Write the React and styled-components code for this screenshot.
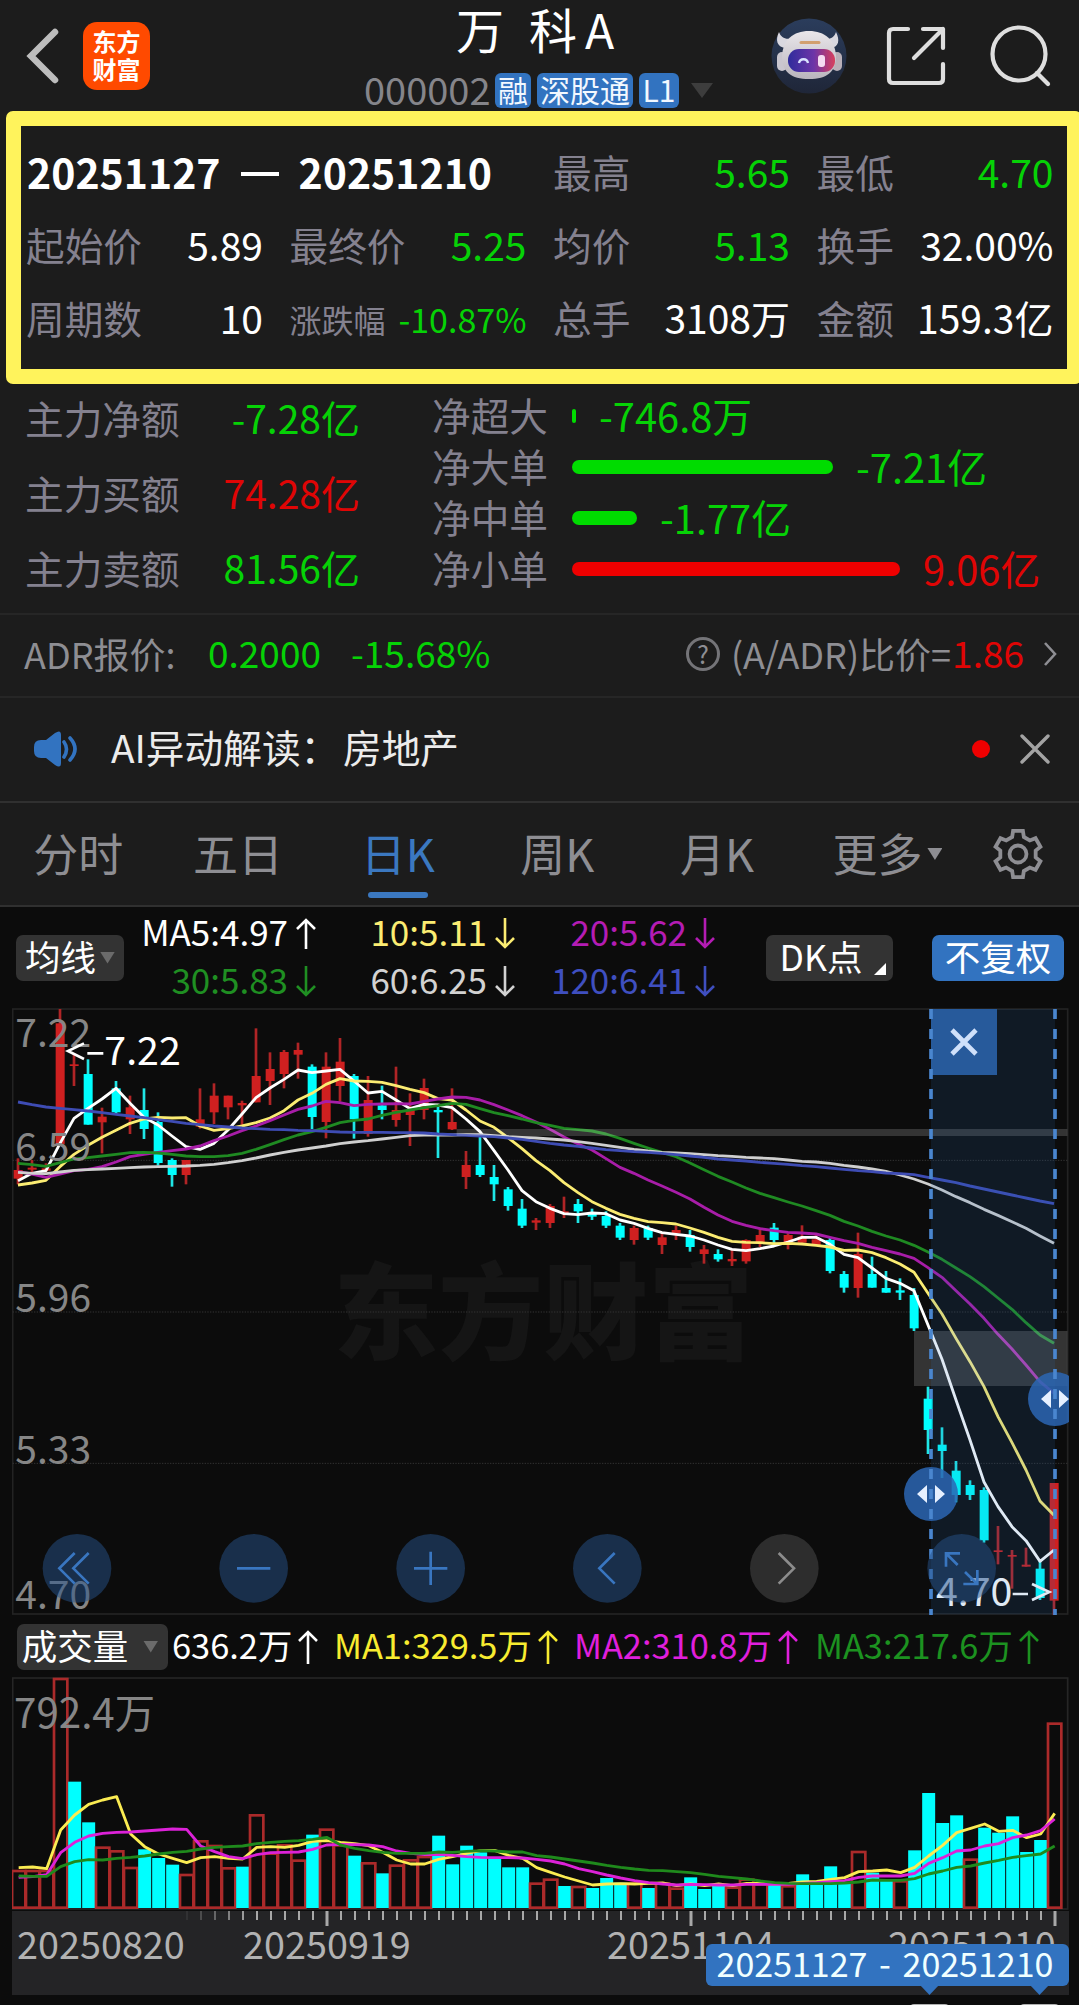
import styled, { createGlobalStyle } from "styled-components";

const RED = "#e00505";
const GREEN = "#06d206";
const BLUE = "#3273c0";
const CYAN = "#00ffff";

// high, body top, body bottom, low, up(1) / down(0)
const candles = [
  [475, 510, 536, 553, 1], [480, 503, 509, 520, 1], [490, 505, 512, 525, 1], [27, 70, 432, 432, 1],
  [160, 193, 198, 258, 1], [178, 222, 374, 374, 0], [323, 350, 367, 460, 1], [243, 265, 337, 345, 0],
  [287, 322, 358, 402, 1], [265, 330, 387, 417, 0], [337, 366, 489, 497, 0], [475, 480, 525, 560, 0],
  [480, 480, 525, 553, 1], [265, 358, 380, 386, 1], [250, 287, 337, 372, 1], [287, 287, 322, 358, 1],
  [302, 309, 316, 376, 1], [85, 228, 307, 307, 1], [157, 207, 243, 315, 1], [150, 156, 222, 265, 1],
  [128, 150, 164, 236, 1], [193, 200, 351, 387, 0], [157, 200, 366, 415, 1], [114, 185, 258, 304, 1],
  [222, 228, 358, 416, 0], [228, 300, 402, 410, 1], [257, 316, 330, 358, 0], [200, 330, 360, 380, 1],
  [280, 330, 345, 438, 1], [236, 264, 330, 358, 1], [320, 330, 337, 474, 0], [265, 366, 388, 390, 1],
  [453, 495, 531, 567, 1], [410, 495, 525, 531, 0], [495, 531, 553, 603, 0], [561, 568, 618, 632, 0],
  [597, 626, 677, 684, 0], [654, 661, 668, 690, 1], [612, 618, 669, 684, 1], [590, 634, 641, 654, 1],
  [597, 612, 634, 669, 0], [626, 640, 650, 660, 0], [634, 648, 677, 684, 0], [669, 677, 713, 720, 0],
  [677, 684, 720, 734, 1], [677, 684, 713, 720, 0], [698, 712, 735, 762, 1], [677, 690, 700, 720, 1],
  [690, 705, 741, 755, 0], [735, 748, 762, 791, 1], [748, 762, 778, 785, 0], [750, 777, 784, 798, 1],
  [718, 720, 784, 791, 1], [683, 705, 728, 741, 1], [669, 683, 720, 735, 0], [700, 705, 735, 748, 1],
  [676, 710, 728, 735, 1], [705, 718, 735, 738, 1], [712, 720, 813, 820, 0], [813, 822, 863, 878, 0],
  [698, 762, 864, 893, 1], [770, 822, 863, 863, 0], [813, 864, 878, 878, 0], [835, 871, 878, 900, 0],
  [864, 885, 985, 993, 0], [1160, 1196, 1290, 1362, 0], [1282, 1334, 1353, 1434, 0], [1383, 1412, 1485, 1507, 0],
  [1441, 1455, 1485, 1500, 0], [1462, 1470, 1621, 1628, 0], [1578, 1651, 1656, 1693, 1], [1650, 1665, 1670, 1766, 1],
  [1643, 1694, 1700, 1700, 1], [1680, 1706, 1794, 1800, 0], [1449, 1449, 1802, 1845, 1],
];

const priceLines = [
  {
    color: "#ffffff",
    data: [542, 520, 512, 430, 355, 325, 297, 265, 310, 352, 375, 408, 440, 448, 430, 390, 342, 293, 264, 238, 210, 218, 213, 208, 243, 279, 274, 300, 326, 313, 315, 323, 357, 395, 452, 510, 572, 605, 625, 641, 644, 639, 641, 660, 670, 685, 698, 703, 708, 720, 735, 748, 752, 746, 738, 726, 712, 712, 733, 763, 773, 804, 835, 850, 872, 975, 1078, 1200, 1320, 1446, 1520, 1580, 1622, 1684, 1650],
  },
  {
    color: "#fbec72",
    data: [555, 549, 541, 500, 463, 436, 412, 391, 370, 357, 352, 354, 353, 378, 391, 386, 378, 368, 354, 332, 300, 280, 253, 236, 243, 244, 247, 257, 268, 278, 296, 300, 330, 363, 382, 413, 446, 482, 512, 548, 578, 605, 625, 643, 655, 665, 668, 672, 684, 697, 712, 724, 727, 728, 731, 730, 732, 736, 741, 751, 750, 758, 773, 792, 817, 880, 942, 1015, 1085, 1160, 1250, 1328, 1410, 1503, 1546],
  },
  {
    color: "#a81da8",
    data: [515, 522, 532, 522, 512, 508, 500, 486, 470, 463, 457, 452, 447, 438, 422, 408, 392, 378, 362, 345, 328, 318, 304, 308, 317, 313, 312, 311, 312, 304, 297, 291, 292, 300, 314, 330, 347, 366, 388, 411, 432, 450, 476, 502, 520, 540, 558, 577, 597, 622, 645, 664, 676, 686, 692, 697, 699, 702, 712, 722, 730, 742, 752, 762, 775, 803, 832, 872, 912, 955, 1003, 1047, 1095, 1145, 1180],
  },
  {
    color: "#1f8a22",
    data: [490, 494, 499, 488, 477, 473, 468, 463, 458, 457, 459, 463, 468, 470, 470, 467, 460, 448, 434, 419, 405, 395, 382, 368, 361, 357, 346, 337, 330, 323, 317, 310, 313, 326, 338, 347, 357, 368, 376, 385, 389, 393, 402, 415, 430, 444, 457, 470, 489, 509, 529, 546, 564, 580, 593, 606, 618, 632, 646, 664, 678, 694, 708, 720, 736, 756, 778, 804, 830, 860, 894, 928, 968, 1005, 1030],
  },
  {
    color: "#cfcfcf",
    data: [517, 520, 521, 516, 511, 509, 507, 505, 503, 501, 500, 499, 498, 496, 493, 488, 482, 474, 465, 457, 450, 444, 438, 431, 426, 422, 417, 412, 407, 405, 405, 405, 404, 404, 407, 410, 412, 414, 417, 420, 425, 430, 436, 442, 448, 453, 457, 459, 461, 464, 467, 469, 472, 474, 476, 480, 484, 486, 490, 496, 501, 507, 514, 525, 537, 552, 570, 590, 608, 628, 646, 665, 685, 708, 730],
  },
  {
    color: "#3e4cb4",
    data: [306, 314, 321, 325, 329, 333, 338, 343, 348, 353, 359, 364, 370, 374, 378, 381, 384, 386, 388, 389, 391, 392, 394, 396, 397, 397, 397, 398, 398, 399, 402, 404, 406, 408, 410, 414, 418, 424, 430, 435, 439, 444, 449, 452, 455, 457, 460, 464, 468, 472, 477, 480, 483, 487, 490, 493, 497, 500, 504, 508, 512, 515, 519, 521, 524, 532, 540, 548, 558, 567, 576, 585, 594, 603, 611],
  },
];

// bar top, up(1) / down(0)
const volumes = [
  [812, 1], [812, 1], [812, 1], [236, 1], [545, 0], [667, 0], [742, 1], [753, 1], [803, 1], [748, 0],
  [774, 0], [794, 0], [824, 1], [723, 1], [737, 1], [804, 1], [800, 0], [645, 1], [760, 1], [735, 1],
  [781, 1], [704, 0], [688, 1], [735, 1], [767, 0], [789, 1], [820, 0], [796, 1], [780, 1], [770, 1],
  [707, 0], [793, 0], [737, 0], [757, 0], [775, 0], [802, 0], [802, 0], [850, 1], [838, 1], [858, 0],
  [860, 1], [864, 0], [834, 0], [848, 0], [850, 1], [864, 0], [850, 1], [865, 1], [832, 0], [867, 0],
  [855, 0], [862, 1], [838, 1], [852, 1], [855, 0], [858, 1], [823, 0], [850, 0], [799, 0], [850, 0],
  [755, 1], [818, 0], [842, 0], [843, 1], [751, 0], [579, 0], [669, 0], [646, 0], [778, 1], [683, 0],
  [698, 0], [649, 0], [756, 0], [720, 0], [370, 1],
];

const volumeLines = [
  {
    color: "#fbec52",
    data: [803, 801, 806, 690, 645, 613, 600, 590, 702, 740, 762, 775, 788, 773, 770, 775, 777, 742, 740, 742, 736, 724, 722, 727, 731, 737, 757, 780, 792, 792, 778, 770, 760, 752, 751, 766, 775, 803, 817, 831, 843, 855, 852, 851, 852, 850, 849, 857, 852, 857, 852, 857, 850, 850, 852, 850, 846, 844, 838, 833, 815, 813, 810, 818, 802, 768, 736, 698, 685, 672, 694, 691, 713, 702, 640],
  },
  {
    color: "#dc22d8",
    data: [832, 830, 824, 758, 727, 708, 700, 697, 696, 693, 690, 687, 688, 738, 755, 770, 776, 764, 758, 757, 756, 748, 735, 733, 734, 735, 740, 753, 760, 764, 763, 766, 770, 772, 773, 773, 774, 778, 783, 792, 806, 815, 825, 834, 842, 848, 852, 855, 853, 854, 855, 855, 853, 853, 853, 853, 850, 848, 845, 842, 832, 828, 828, 828, 820, 790, 773, 753, 750, 738, 731, 713, 705, 692, 657],
  },
  {
    color: "#1f8a1c",
    data: [828, 829, 829, 800, 785, 779, 780, 775, 772, 768, 762, 757, 754, 747, 742, 740, 738, 731, 727, 724, 722, 718, 712, 735, 745, 752, 757, 760, 760, 760, 756, 757, 754, 752, 753, 756, 756, 767, 771, 777, 783, 789, 796, 802, 807, 811, 812, 815, 818, 823, 829, 833, 837, 843, 848, 850, 851, 851, 851, 849, 846, 840, 841, 841, 836, 822, 813, 802, 798, 789, 781, 772, 767, 762, 738],
  },
];

const stats = [
  ["最高", "5.65", GREEN],
  ["最低", "4.70", GREEN],
  ["起始价", "5.89"],
  ["最终价", "5.25", GREEN],
  ["均价", "5.13", GREEN],
  ["换手", "32.00%"],
  ["周期数", "10"],
  ["涨跌幅", "-10.87%", GREEN, true],
  ["总手", "3108万"],
  ["金额", "159.3亿"],
];

const funds = [
  ["主力净额", "-7.28亿", GREEN],
  ["主力买额", "74.28亿", RED],
  ["主力卖额", "81.56亿", GREEN],
];

const flows = [
  ["净超大", 4, "-746.8万", GREEN],
  ["净大单", 261, "-7.21亿", GREEN],
  ["净中单", 65, "-1.77亿", GREEN],
  ["净小单", 328, "9.06亿", RED],
];

const averages = [
  ["MA5:4.97", "#ffffff", true],
  ["10:5.11", "#fbec72"],
  ["20:5.62", "#b41cb4"],
  ["30:5.83", "#1f8f22"],
  ["60:6.25", "#d2d2d2"],
  ["120:6.41", "#3f4fc0"],
];

const volumeStats = [
  ["636.2万", "#ffffff", 162],
  ["MA1:329.5万", "#f8ec30", 240],
  ["MA2:310.8万", "#e01fdc", 241],
  ["MA3:217.6万", "#1c9220", 241],
];

const linePoints = (data, x0) => data.map((y, i) => `${x0 + i * 42},${y}`).join(" ");

const gearPoints = Array.from({ length: 6 }, (_, i) => {
  const at = (r, deg) => {
    const a = ((i * 60 - 90 + deg) * Math.PI) / 180;
    return `${26 + r * Math.cos(a)},${26 + r * Math.sin(a)}`;
  };
  return [at(18, -19), at(23.6, -12), at(23.6, 12), at(18, 19)].join(" ");
}).join(" ");

function Arrow({ up, tall }) {
  const h = tall ? 34 : 31;
  return (
    <svg width="20" height={h} viewBox={`0 0 20 ${h}`} fill="none" stroke="currentColor" strokeWidth="2.6">
      {up ? <path d={`M10 ${h}V2M1 11L10 2L19 11`} /> : <path d={`M10 0V${h - 2}M1 ${h - 11}L10 ${h - 2}L19 ${h - 11}`} />}
    </svg>
  );
}

function Robot() {
  return (
    <svg width="76" height="76" viewBox="0 0 76 76">
      <defs>
        <linearGradient id="visor" x1="0" x2="1">
          <stop offset="0" stopColor="#2f2c9c" />
          <stop offset="0.55" stopColor="#6d35a8" />
          <stop offset="1" stopColor="#d8405c" />
        </linearGradient>
        <linearGradient id="disc" x1="0" y1="0" x2="0" y2="1">
          <stop offset="0" stopColor="#2b3d5c" />
          <stop offset="1" stopColor="#1f2638" />
        </linearGradient>
        <linearGradient id="helmet" x1="0" y1="0" x2="0" y2="1">
          <stop offset="0" stopColor="#e9e6ea" />
          <stop offset="1" stopColor="#b9b5bd" />
        </linearGradient>
      </defs>
      <circle cx="38" cy="38" r="37.5" fill="url(#disc)" />
      <path d="M8 14c-4 8-2 15 6 16l8-10c-7 2-12 0-14-6zM65 14c4 8 3 15-5 16l-8-10c7 2 11 0 13-6z" fill="#d9d8e0" />
      <rect x="6" y="34" width="10" height="19" rx="5" fill="#c9c6cf" />
      <rect x="61" y="34" width="10" height="19" rx="5" fill="#b9b0b8" />
      <path d="M38 13c16 0 26 9 27 25 0 16-9 23-27 23s-27-7-27-23c1-16 11-25 27-25z" fill="url(#helmet)" />
      <path d="M30 24.5h18" stroke="#d2a06f" strokeWidth="3" strokeLinecap="round" />
      <rect x="17" y="31" width="47" height="23" rx="11" fill="url(#visor)" />
      <path d="M28 45c1-5 8-5 9 0" fill="none" stroke="#d9e2ff" strokeWidth="2.4" />
      <rect x="47" y="37" width="7" height="12" rx="3" fill="#f5dcf2" />
    </svg>
  );
}

function Header() {
  return (
    <HeaderBar>
      <Left>
        <svg width="34" height="56" viewBox="0 0 34 56" fill="none" stroke="#bdbdbd" strokeWidth="6.5" strokeLinecap="round">
          <path d="M29 4L5 28L29 52" strokeLinejoin="miter" />
        </svg>
        <Logo>
          <span>东方</span>
          <span>财富</span>
        </Logo>
      </Left>
      <Center>
        <Title>
          <span>万</span>
          <span>科</span>
          <b>A</b>
        </Title>
        <Code>
          <span>000002</span>
          <Badge $w={36}>融</Badge>
          <Badge $w={96}>深股通</Badge>
          <Badge $w={40}>L1</Badge>
          <Caret $w={22} $h={15} $color="#3d3d3d" $ml={6} />
        </Code>
      </Center>
      <Right>
        <Robot />
        <svg width="60" height="60" viewBox="0 0 60 60" fill="none" stroke="#dedede" strokeWidth="4.2" strokeLinecap="round" strokeLinejoin="round">
          <path d="M22 3H7Q3 3 3 7V53Q3 57 7 57H53Q57 57 57 53V38M37 3H57V22M57 3L28 32" />
        </svg>
        <svg width="62" height="62" viewBox="0 0 62 62" fill="none" stroke="#dedede" strokeWidth="4.2" strokeLinecap="round">
          <circle cx="29" cy="29" r="26.5" />
          <path d="M47 48L58 59" />
        </svg>
      </Right>
    </HeaderBar>
  );
}

function PriceChart() {
  return (
    <ChartSvg width="1057" height="608" viewBox="36 24 3171 1824">
      <rect x="38" y="27" width="3165" height="1815" fill="none" stroke="#232323" strokeWidth="5" />
      <Watermark x="1000" y="1053">东方财富</Watermark>
      {[481, 936, 1390].map((y) => (
        <line key={y} x1="38" x2="3203" y1={y} y2={y} stroke="#333" strokeWidth="3" strokeDasharray="4 4" />
      ))}
      {candles.map(([high, top, bottom, low, up], i) => {
        const x = 54 + i * 42;
        return (
          <g key={i} fill={up ? "#cf2020" : CYAN}>
            <rect x={x - 4} y={high} width="8" height={low - high} fill={up ? "#b02426" : "#1fe6e6"} />
            <rect x={x - 13} y={top} width="27" height={bottom - top} />
          </g>
        );
      })}
      {priceLines.map((line) => (
        <polyline key={line.color} points={linePoints(line.data, 54)} fill="none" stroke={line.color} strokeWidth="8.5" strokeLinejoin="round" />
      ))}
      <rect x="1370" y="387" width="1832" height="21" fill="#fff" opacity="0.17" />
      <rect x="2742" y="993" width="460" height="165" fill="#fff" opacity="0.17" />
      <AxisText x="46" y="140">7.22</AxisText>
      <AxisText x="46" y="482">6.59</AxisText>
      <AxisText x="46" y="936">5.96</AxisText>
      <AxisText x="46" y="1391">5.33</AxisText>
      <AxisText x="46" y="1828">4.70</AxisText>
      <g stroke="#fff" strokeWidth="8" fill="none">
        <path d="M252 130L204 153L252 177M262 160H310" />
        <path d="M3038 1782H3084M3096 1752L3148 1776L3096 1800" />
      </g>
      <PeakText x="313" y="194">7.22</PeakText>
      <PeakText x="2808" y="1817">4.70</PeakText>

      {/* selected range */}
      <rect x="2793" y="27" width="372" height="1816" fill="#2a6db8" opacity="0.15" />
      <rect x="2793" y="27" width="198" height="198" fill="#275a9b" />
      <path d="M2856 90L2928 162M2928 90L2856 162" stroke="#cfe0fa" strokeWidth="14" />
      <circle cx="2793" cy="1482" r="81" fill="#2b66b4" opacity="0.85" />
      <circle cx="3165" cy="1197" r="81" fill="#2b66b4" opacity="0.85" />
      {[2793, 3165].map((x) => (
        <line key={x} x1={x} x2={x} y1="27" y2="1845" stroke="#4a86cf" strokeWidth="11" strokeDasharray="30 30" />
      ))}
      <path d="M2751 1482L2781 1455V1509ZM2835 1482L2805 1455V1509Z" fill="#e6f0ff" />
      <path d="M3123 1197L3153 1170V1224ZM3207 1197L3177 1170V1224Z" fill="#e6f0ff" />

      {/* floating controls */}
      {[231, 761, 1292, 1822, 2353, 2885].map((x) => (
        <circle key={x} cx={x} cy="1705" r="103" fill={x === 2353 ? "#2d2d2d" : "#25518a"} opacity={x === 2353 ? 1 : 0.5} />
      ))}
      <g fill="none" stroke="#3976c0" strokeWidth="8">
        <path d="M224 1659L178 1705L224 1751M266 1659L220 1705L266 1751" />
        <path d="M711 1705H811" />
        <path d="M1242 1705H1342M1292 1655V1755" />
        <path d="M1844 1659L1798 1705L1844 1751" />
        <path d="M2838 1700V1660H2880M2840 1662L2873 1695M2890 1752H2932V1710M2930 1750L2895 1716" />
      </g>
      <path d="M2336 1659L2382 1705L2336 1751" fill="none" stroke="#8c8c8c" strokeWidth="8" />
    </ChartSvg>
  );
}

function VolumeChart() {
  return (
    <ChartSvg width="1057" height="234" viewBox="36 231 3171 702">
      <rect x="38" y="234" width="3165" height="693" fill="none" stroke="#262626" strokeWidth="5" />
      {volumes.map(([top, up], i) => {
        const x = 56 + i * 42;
        return up ? (
          <rect key={i} x={x - 20} y={top + 1} width="40" height={922 - top} fill="none" stroke="#ab2a2a" strokeWidth="8" />
        ) : (
          <rect key={i} x={x - 19.5} y={top} width="39" height={924 - top} fill={CYAN} />
        );
      })}
      {volumeLines.map((line) => (
        <polyline key={line.color} points={linePoints(line.data, 56)} fill="none" stroke={line.color} strokeWidth="8.5" strokeLinejoin="round" />
      ))}
      <AxisText x="42" y="383" $size={121}>792.4万</AxisText>
    </ChartSvg>
  );
}

function TimeAxis() {
  return (
    <Axis>
      <svg width="1057" height="16" viewBox="12 0 1057 16">
        {Array.from({ length: 63 }, (_, i) => {
          const major = i === 10 || i === 36 || i === 62;
          return (
            <rect
              key={i}
              x={186 + i * 14 - (major ? 0.5 : 0)}
              y="0"
              width={major ? 3 : 2}
              height={major ? 15 : 9}
              fill="#a8a8a8"
              opacity={Math.min(1, 0.1 + i * 0.2)}
            />
          );
        })}
      </svg>
      <Dates>
        <span>20250820</span>
        <span>20250919</span>
        <span>20251104</span>
        <span>20251210</span>
      </Dates>
      <RangeTip>
        20251127 - 20251210
        <TipArrow $right={130} />
        <TipArrow $right={20} />
      </RangeTip>
    </Axis>
  );
}

export default function App() {
  return (
    <Page>
      <GlobalStyle />
      <Header />

      <SummaryArea>
        <Summary>
          <DateRange>
            <span>20251127</span>
            <Dash />
            <span>20251210</span>
          </DateRange>
          {stats.map(([label, value, color, small]) => (
            <Stat key={label} $small={small}>
              <Label $small={small}>{label}</Label>
              <Value $color={color} $small={small}>{value}</Value>
            </Stat>
          ))}
        </Summary>
      </SummaryArea>

      <Funds>
        <FundList>
          {funds.map(([label, value, color]) => (
            <FundRow key={label}>
              <Label>{label}</Label>
              <Value $color={color}>{value}</Value>
            </FundRow>
          ))}
        </FundList>
        <FlowList>
          {flows.map(([label, width, value, color]) => (
            <FlowRow key={label}>
              <Label>{label}</Label>
              <FlowBar $color={color} style={{ width }} />
              <FlowValue $color={color}>{value}</FlowValue>
            </FlowRow>
          ))}
        </FlowList>
      </Funds>

      <Adr>
        <AdrLabel>ADR报价:</AdrLabel>
        <AdrValue $color={GREEN} $ml={31}>0.2000</AdrValue>
        <AdrValue $color={GREEN} $ml={30}>-15.68%</AdrValue>
        <AdrRight>
          <Question>?</Question>
          <span>(A/ADR)比价=</span>
          <AdrValue $color={RED} $ml={1}>1.86</AdrValue>
          <svg width="14" height="26" viewBox="0 0 14 26" fill="none" stroke="#8e8e93" strokeWidth="2.6">
            <path d="M2 2L12 13L2 24" />
          </svg>
        </AdrRight>
      </Adr>

      <Notice>
        <svg width="44" height="36" viewBox="0 0 44 36">
          <path d="M7 9H12L21 2Q27-2 27 4V32Q27 38 21 34L12 27H7Q0 27 0 20V16Q0 9 7 9Z" fill={BLUE} />
          <path d="M30 11Q35 18 30 26M36 7Q46 18 36 29" fill="none" stroke={BLUE} strokeWidth="3.6" strokeLinecap="round" />
        </svg>
        <NoticeText>AI异动解读：</NoticeText>
        <NoticeText>房地产</NoticeText>
        <Dot />
        <svg width="30" height="30" viewBox="0 0 30 30" stroke="#a3a3a3" strokeWidth="3.4" strokeLinecap="round">
          <path d="M2 2L28 28M28 2L2 28" />
        </svg>
      </Notice>

      <Tabs>
        <Tab>分时</Tab>
        <Tab>五日</Tab>
        <Tab $active>日K</Tab>
        <Tab>周K</Tab>
        <Tab>月K</Tab>
        <More>
          更多
          <Caret $w={15} $h={12} $color="#8e8e93" $ml={5} />
        </More>
        <svg width="52" height="52" viewBox="0 0 52 52" fill="none" stroke="#8e8e93" strokeWidth="3.8">
          <polygon points={gearPoints} />
          <circle cx="26" cy="26" r="8.5" />
        </svg>
      </Tabs>

      <AverageBar>
        <Chip $w={108}>
          均线
          <Caret $w={15} $h={12} $color="#6b6b6b" $ml={4} />
        </Chip>
        <AverageGrid>
          {averages.map(([text, color, up]) => (
            <Average key={text} $color={color}>
              <span>{text}</span>
              <Arrow up={up} />
            </Average>
          ))}
        </AverageGrid>
        <DkChip $w={127}>
          DK点
          <svg width="12" height="12" viewBox="0 0 12 12">
            <path d="M12 0V12H0Z" fill="#fff" />
          </svg>
        </DkChip>
        <Chip $w={132} $blue>不复权</Chip>
      </AverageBar>

      <PriceChart />

      <VolumeBar>
        <Chip $w={151} $pr={5}>
          成交量
          <Caret $w={15} $h={12} $color="#6b6b6b" $ml={15} />
        </Chip>
        {volumeStats.map(([text, color, width]) => (
          <VolumeStat key={text} $color={color} $w={width}>
            <span>{text}</span>
            <Arrow up tall />
          </VolumeStat>
        ))}
      </VolumeBar>

      <VolumeChart />
      <TimeAxis />
      <NextPanel>
        <span />
        <span />
      </NextPanel>
    </Page>
  );
}

const GlobalStyle = createGlobalStyle`
  * {
    box-sizing: border-box;
  }
  body {
    margin: 0;
    background: #0c0c0c;
  }
  svg {
    display: block;
    flex-shrink: 0;
  }
`;

const Page = styled.div`
  width: 1079px;
  height: 2005px;
  overflow: hidden;
  display: flex;
  flex-direction: column;
  background: #0c0c0c;
  color: #fff;
  font-family: "Noto Sans CJK SC", "Noto Sans", sans-serif;
  line-height: 1;
  white-space: nowrap;
`;

const HeaderBar = styled.header`
  height: 111px;
  flex-shrink: 0;
  display: flex;
  justify-content: space-between;
  background: #1c1c1c;
`;

const Left = styled.div`
  width: 364px;
  padding: 22px 0 0 26px;
  display: flex;
  align-items: center;
  height: 90px;
  gap: 23px;
`;

const Logo = styled.div`
  width: 67px;
  height: 68px;
  display: flex;
  flex-direction: column;
  align-items: center;
  justify-content: center;
  gap: 4px;
  padding-bottom: 2px;
  border-radius: 14px;
  background: #ff4a00;
  font-size: 24px;
  font-weight: 700;
`;

const Center = styled.div`
  flex: 1;
  display: flex;
  flex-direction: column;
`;

const Title = styled.div`
  height: 73px;
  padding: 4px 0 0 92px;
  display: flex;
  font-size: 48px;
  line-height: 48px;
  span + span {
    margin-left: 25px;
  }
  b {
    font-weight: 400;
    margin-left: 8px;
  }
`;

const Code = styled.div`
  display: flex;
  align-items: center;
  height: 35px;
  gap: 6px;
  color: #85858a;
  font-size: 38px;
  > span {
    width: 125px;
    padding-bottom: 4px;
  }
`;

const Badge = styled.div`
  width: ${({ $w }) => $w}px;
  height: 35px;
  border-radius: 6px;
  background: ${BLUE};
  color: #f2f8ff;
  font-size: 30px;
  line-height: 32px;
  text-align: center;
`;

const Caret = styled.i`
  width: ${({ $w }) => $w}px;
  height: ${({ $h }) => $h}px;
  margin-left: ${({ $ml }) => $ml}px;
  background: ${({ $color }) => $color};
  clip-path: polygon(0 0, 100% 0, 50% 100%);
`;

const Right = styled.div`
  width: 308px;
  height: 111px;
  display: flex;
  align-items: center;
  gap: 39px;
  svg:last-child {
    margin-left: 5px;
  }
`;

const SummaryArea = styled.div`
  height: 273px;
  flex-shrink: 0;
  padding-left: 6px;
  background: #1c1c1c;
`;

const Summary = styled.section`
  width: 1076px;
  height: 273px;
  padding: 9px 13px 0 6px;
  border: 15px solid #fff35c;
  border-radius: 7px;
  display: grid;
  grid-template-columns: repeat(4, 236px);
  grid-auto-rows: 73px;
  column-gap: 27.5px;
`;

const DateRange = styled.div`
  grid-column: span 2;
  display: flex;
  align-items: center;
  gap: 20px;
  font-size: 41px;
  font-weight: 700;
`;

const Dash = styled.i`
  width: 38px;
  height: 4px;
  margin-top: 5px;
  background: #fff;
`;

const Stat = styled.div`
  display: flex;
  align-items: center;
  justify-content: space-between;
  padding-top: ${({ $small }) => ($small ? 3 : 0)}px;
`;

const Label = styled.span`
  margin-left: -1px;
  color: #84818f;
  font-size: ${({ $small }) => ($small ? 32 : 38.7)}px;
`;

const Value = styled.span`
  color: ${({ $color }) => $color || "#fff"};
  font-size: ${({ $small }) => ($small ? 34 : 39)}px;
`;

const FlowValue = styled(Value)`
  margin-left: 1px;
  font-size: 39.8px;
`;

const Funds = styled.section`
  height: 231px;
  flex-shrink: 0;
  display: flex;
  background: #1c1c1c;
  border-bottom: 2px solid #262626;
`;

const FundList = styled.div`
  width: 360px;
  margin-top: -4px;
  padding-left: 26px;
  display: grid;
  grid-template-rows: repeat(3, 75px);
  align-content: start;
`;

const FundRow = styled.div`
  display: flex;
  align-items: center;
  justify-content: space-between;
`;

const FlowList = styled.div`
  padding: 5px 0 0 73px;
  display: grid;
  grid-template-rows: repeat(4, 51px);
  align-content: start;
`;

const FlowRow = styled.div`
  display: flex;
  align-items: center;
`;

const FlowBar = styled.div`
  height: 14px;
  margin: 2px 22px 0 24px;
  border-radius: 7px;
  background: ${({ $color }) => ($color === RED ? "#ef0000" : "#00dc00")};
`;

const Adr = styled.section`
  height: 83px;
  flex-shrink: 0;
  display: flex;
  align-items: center;
  padding: 0 22px 6px 24px;
  background: #1c1c1c;
  border-bottom: 2px solid #262626;
  color: #8e8e93;
  font-size: 36px;
`;

const AdrLabel = styled.span`
  width: 153px;
`;

const AdrValue = styled.span`
  margin-left: ${({ $ml }) => $ml}px;
  color: ${({ $color }) => $color};
  font-size: 37px;
`;

const AdrRight = styled.div`
  margin-left: auto;
  display: flex;
  align-items: center;
  svg {
    margin: 3px 0 0 19px;
  }
`;

const Question = styled.i`
  width: 34px;
  height: 34px;
  margin: 3px 11px 0 0;
  border: 3px solid #747478;
  border-radius: 50%;
  font-size: 25px;
  font-style: normal;
  line-height: 26px;
  text-align: center;
`;

const Notice = styled.section`
  height: 105px;
  flex-shrink: 0;
  display: flex;
  align-items: center;
  padding: 0 29px 2px 34px;
  background: #1c1c1c;
  border-bottom: 2px solid #303030;
`;

const NoticeText = styled.span`
  padding-bottom: 4px;
  color: #ececec;
  font-size: 38.7px;
  &:first-of-type {
    width: 232px;
    margin-left: 33px;
  }
`;

const Dot = styled.i`
  width: 18px;
  height: 18px;
  margin: 0 30px 0 auto;
  border-radius: 50%;
  background: #ef0000;
`;

const Tabs = styled.nav`
  height: 104px;
  flex-shrink: 0;
  display: flex;
  align-items: center;
  background: #1c1c1c;
  border-bottom: 2px solid #303030;
  color: #8e8e93;
  font-size: 45px;
`;

const Tab = styled.div`
  width: 159.7px;
  height: 102px;
  display: flex;
  flex-direction: column;
  align-items: center;
  padding: 27px 3px 0 0;
  color: ${({ $active }) => ($active ? "#3b78c0" : "inherit")};
  &::after {
    content: "";
    width: 60px;
    height: 6px;
    margin-top: 17px;
    border-radius: 3px;
    background: ${({ $active }) => ($active ? "#3b78c0" : "transparent")};
  }
`;

const More = styled.div`
  display: flex;
  align-items: center;
  width: 160px;
  margin-left: 34px;
  padding-bottom: 3px;
  ${Caret} {
    margin-top: 3px;
  }
`;

const AverageBar = styled.section`
  height: 101px;
  flex-shrink: 0;
  display: flex;
  align-items: center;
  padding: 0 15px 0 16px;
`;

const Chip = styled.div`
  width: ${({ $w }) => $w}px;
  height: 46px;
  flex-shrink: 0;
  display: flex;
  align-items: center;
  justify-content: center;
  padding: 0 ${({ $pr }) => $pr || 0}px 4px 0;
  border-radius: 7px;
  background: ${({ $blue }) => ($blue ? BLUE : "#333")};
  font-size: 35.5px;
  ${Caret} {
    margin-top: 4px;
  }
`;

const DkChip = styled(Chip)`
  margin: 0 39px 0 auto;
  padding-left: 7px;
  svg {
    margin: 26px 0 0 12px;
  }
`;

const AverageGrid = styled.div`
  display: grid;
  grid-template-columns: 192px 199px 200px;
  grid-auto-rows: 48px;
`;

const Average = styled.div`
  display: flex;
  align-items: center;
  justify-content: flex-end;
  gap: 8px;
  color: ${({ $color }) => $color};
  font-size: 35px;
  span {
    padding-bottom: 6px;
  }
`;

const ChartSvg = styled.svg`
  margin-left: 12px;
`;

const Watermark = styled.text`
  font-size: 315px;
  font-weight: 900;
  fill: #151515;
`;

const AxisText = styled.text`
  font-size: ${({ $size }) => $size || 117}px;
  fill: #868686;
`;

const PeakText = styled.text`
  font-size: 118px;
  fill: #fff;
`;

const VolumeBar = styled.section`
  height: 61px;
  flex-shrink: 0;
  display: flex;
  align-items: center;
  padding-left: 17px;
`;

const VolumeStat = styled.div`
  width: ${({ $w }) => $w}px;
  display: flex;
  align-items: center;
  gap: 6px;
  padding-left: 4px;
  color: ${({ $color }) => $color};
  font-size: 34.4px;
  span {
    padding-bottom: 5px;
  }
`;

const Axis = styled.section`
  position: relative;
  width: 1057px;
  height: 84px;
  flex-shrink: 0;
  margin-left: 12px;
  background: #242426;
`;

const Dates = styled.div`
  display: grid;
  grid-template-columns: 226px 364px 281px 170px;
  margin-top: -3px;
  padding-left: 5px;
  color: #b2b2b2;
  font-size: 37.8px;
`;

const RangeTip = styled.div`
  position: absolute;
  top: 33px;
  right: 0;
  width: 363px;
  height: 42px;
  padding-right: 5px;
  border-radius: 6px;
  background: ${BLUE};
  color: #f0ffff;
  font-size: 34px;
  line-height: 37px;
  text-align: center;
  word-spacing: 4px;
`;

const TipArrow = styled.i`
  position: absolute;
  top: 41px;
  right: ${({ $right }) => $right}px;
  width: 19px;
  height: 10px;
  background: ${BLUE};
  clip-path: polygon(0 0, 100% 0, 50% 100%);
`;

const NextPanel = styled.div`
  display: flex;
  gap: 71px;
  padding: 9px 0 0 910px;
  span {
    width: 39px;
    height: 4px;
    border-radius: 4px 4px 0 0;
    background: #b0b0b0;
  }
`;
